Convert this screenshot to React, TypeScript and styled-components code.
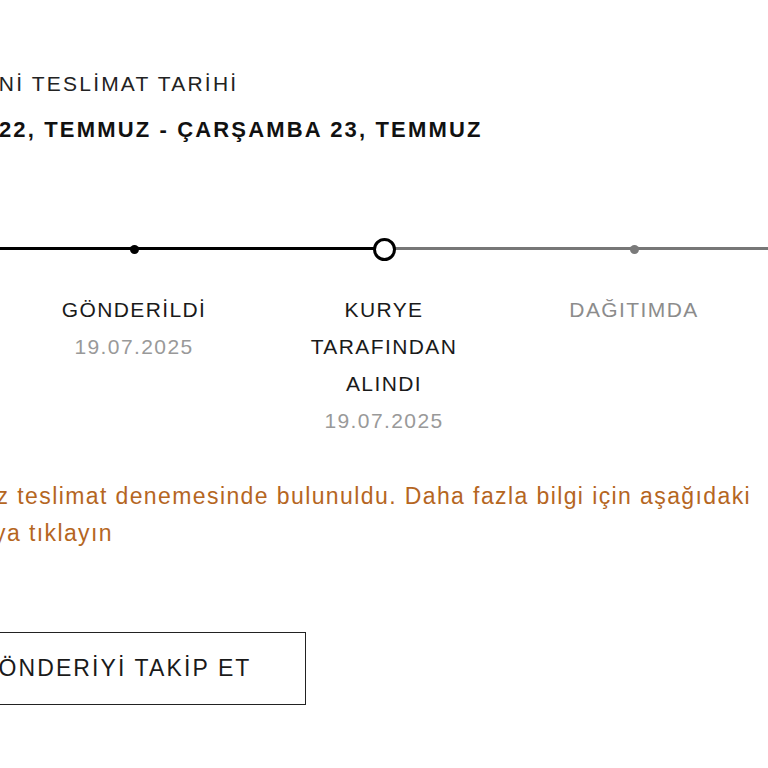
import React from "react";
import styled, { createGlobalStyle } from "styled-components";

const GlobalStyle = createGlobalStyle`
  html, body {
    margin: 0;
    padding: 0;
    background: #fff;
    overflow: hidden;
  }
  body {
    font-family: "Liberation Sans", Arial, sans-serif;
    color: #111;
  }
`;

const Page = styled.main`
  width: 1100px;
  margin-left: -76px;
  padding-top: 70px;
`;

const Eyebrow = styled.p`
  margin: 0;
  font-size: 21px;
  line-height: 28px;
  letter-spacing: 2.2px;
  color: #222;
`;

const DateRange = styled.h2`
  margin: 18px 0 0 8px;
  font-size: 22px;
  line-height: 28px;
  font-weight: 700;
  letter-spacing: 2.15px;
  color: #111;
`;

const Timeline = styled.ol`
  list-style: none;
  display: grid;
  grid-template-columns: repeat(5, 250px);
  margin: 93px 0 0 -165px;
  padding: 0;
`;

const Step = styled.li`
  display: flex;
  flex-direction: column;
  align-items: center;
`;

const Track = styled.div<{ $left: boolean; $right: boolean }>`
  position: relative;
  width: 100%;
  height: 24px;
  display: flex;
  align-items: center;
  justify-content: center;

  &::before,
  &::after {
    content: "";
    position: absolute;
    top: 10px;
    height: 3px;
    width: 50%;
  }
  &::before {
    left: 0;
    background: ${(p) => (p.$left ? "#000" : "#777")};
  }
  &::after {
    right: 0;
    background: ${(p) => (p.$right ? "#000" : "#777")};
  }
`;

const Dot = styled.span<{ $kind: "done" | "current" | "todo" }>`
  position: relative;
  z-index: 1;
  box-sizing: border-box;
  border-radius: 50%;
  ${(p) =>
    p.$kind === "current"
      ? `width: 23px; height: 23px; border: 3px solid #000; background: #fff;`
      : `width: 9px; height: 9px; background: ${p.$kind === "done" ? "#000" : "#7a7a7a"};`}
`;

const Labels = styled.div`
  margin-top: 30px;
  text-align: center;
  font-size: 21px;
  line-height: 37px;
  letter-spacing: 1.4px;
`;

const Name = styled.div<{ $muted: boolean }>`
  color: ${(p) => (p.$muted ? "#8c8c8c" : "#1a1a1a")};
  max-width: 170px;
  margin: 0 auto;
`;

const When = styled.div`
  color: #999;
`;

const Notice = styled.p`
  margin: 39px 0 0 -23px;
  width: 890px;
  font-size: 23px;
  line-height: 37px;
  letter-spacing: 1.4px;
  color: #b5661f;
`;

const TrackButton = styled.button`
  margin-top: 80px;
  width: 382px;
  height: 73px;
  border: 1px solid #222;
  background: #fff;
  font-family: inherit;
  font-size: 23px;
  letter-spacing: 2.1px;
  color: #1a1a1a;
  cursor: pointer;
`;

type Status = "done" | "current" | "todo";

const steps: { name: string; date?: string; status: Status }[] = [
  { name: "SİPARİŞ ALINDI", date: "18.07.2025", status: "done" },
  { name: "GÖNDERİLDİ", date: "19.07.2025", status: "done" },
  { name: "KURYE TARAFINDAN ALINDI", date: "19.07.2025", status: "current" },
  { name: "DAĞITIMDA", status: "todo" },
  { name: "TESLİM EDİLDİ", status: "todo" },
];

export default function App() {
  return (
    <>
      <GlobalStyle />
      <Page>
        <Eyebrow>TAHMİNİ TESLİMAT TARİHİ</Eyebrow>
        <DateRange>SALI 22, TEMMUZ - ÇARŞAMBA 23, TEMMUZ</DateRange>

        <Timeline>
          {steps.map((s, i) => {
            const next = steps[i + 1];
            const reached = s.status !== "todo";
            return (
              <Step key={s.name}>
                <Track
                  $left={i === 0 || reached}
                  $right={!!next && next.status !== "todo"}
                >
                  <Dot $kind={s.status} />
                </Track>
                <Labels>
                  <Name $muted={s.status === "todo"}>{s.name}</Name>
                  {s.date && <When>{s.date}</When>}
                </Labels>
              </Step>
            );
          })}
        </Timeline>

        <Notice>
          Başarısız teslimat denemesinde bulunuldu. Daha fazla bilgi için
          aşağıdaki bağlantıya tıklayın
        </Notice>

        <TrackButton>GÖNDERİYİ TAKİP ET</TrackButton>
      </Page>
    </>
  );
}
